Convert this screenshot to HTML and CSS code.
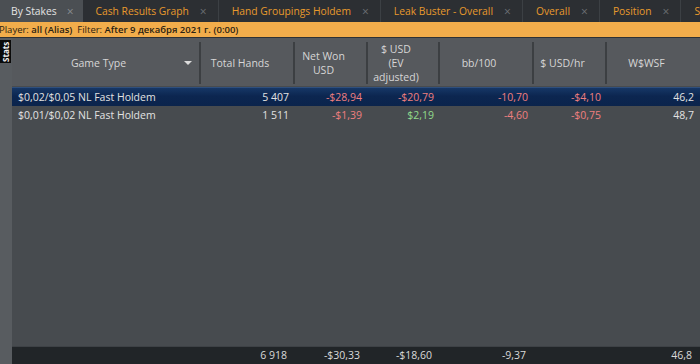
FILE: index.html
```html
<!DOCTYPE html>
<html>
<head lang="ru">
    <meta charset="UTF-8">
    <title>By Stakes</title>
    <link rel="stylesheet" href="styles.css">
</head>
<body>
    <div class="tabs">
        <div class="tab tab_active"><span>By Stakes</span><i>×</i></div>
        <div class="tab"><span>Cash Results Graph</span><i>×</i></div>
        <div class="tab"><span>Hand Groupings Holdem</span><i>×</i></div>
        <div class="tab"><span>Leak Buster - Overall</span><i>×</i></div>
        <div class="tab"><span>Overall</span><i>×</i></div>
        <div class="tab"><span>Position</span><i>×</i></div>
        <div class="tab tab_last"><span>Sess</span></div>
    </div>
    <div class="filter">
        Player: <b>all (Alias)</b>&nbsp; Filter: <b>After 9 декабря 2021 г. (0:00)</b>
    </div>
    <div class="main">
        <div class="side">
            <div class="side_label">Stats</div>
        </div>
        <div class="grid">
            <div class="row head">
                <div class="cell cell_game">Game Type<span class="arrow"></span></div>
                <div class="cell">Total Hands</div>
                <div class="cell">Net Won<br>USD</div>
                <div class="cell">$ USD<br>(EV<br>adjusted)</div>
                <div class="cell">bb/100</div>
                <div class="cell">$ USD/hr</div>
                <div class="cell">W$WSF</div>
            </div>
            <div class="row data selected">
                <div class="cell text">$0,02/$0,05 NL Fast Holdem</div>
                <div class="cell">5 407</div>
                <div class="cell neg">-$28,94</div>
                <div class="cell neg">-$20,79</div>
                <div class="cell neg">-10,70</div>
                <div class="cell neg">-$4,10</div>
                <div class="cell">46,2</div>
            </div>
            <div class="row data">
                <div class="cell text">$0,01/$0,02 NL Fast Holdem</div>
                <div class="cell">1 511</div>
                <div class="cell neg">-$1,39</div>
                <div class="cell pos">$2,19</div>
                <div class="cell neg">-4,60</div>
                <div class="cell neg">-$0,75</div>
                <div class="cell">48,7</div>
            </div>
            <div class="empty"></div>
            <div class="row total">
                <div class="cell text"></div>
                <div class="cell">6 918</div>
                <div class="cell">-$30,33</div>
                <div class="cell">-$18,60</div>
                <div class="cell">-9,37</div>
                <div class="cell"></div>
                <div class="cell">46,8</div>
            </div>
        </div>
    </div>
</body>
</html>
```

FILE: styles.css
```css
* {
    margin: 0;
    padding: 0;
    box-sizing: border-box;
}

html,
body {
    height: 100%;
}

body {
    display: flex;
    flex-direction: column;
    background-color: #474b4f;
    font-family: "Open Sans", "Noto Sans", sans-serif;
    font-size: 10.5px;
    color: #d6d6d6;
    overflow: hidden;
}

.tabs {
    display: flex;
    height: 22px;
    background-color: #2c2f33;
    white-space: nowrap;
    overflow: hidden;
    font-size: 10.3px;
}

.tab {
    display: flex;
    align-items: center;
    flex-shrink: 0;
    padding: 0 11px 0 13px;
    border-right: 1px solid #3c4044;
    color: #e89a2c;
}

.tab i {
    font-style: normal;
    font-size: 12px;
    color: #6c7074;
    margin-left: 11px;
}

.tab_active {
    background-color: #4b4f53;
    color: #e4e4e4;
    padding-left: 11px;
    padding-right: 9px;
    border-right: none;
}

.tab_active i {
    margin-left: 10px;
    color: #8a8e92;
}

.tab_last {
    border-right: none;
}

.filter {
    height: 16px;
    line-height: 15px;
    background-color: #f2ad4b;
    color: #2a2212;
    font-size: 9.5px;
    text-indent: -1px;
    white-space: nowrap;
    border-bottom: 1px solid #2e3134;
}

.filter b {
    font-weight: 600;
}

.main {
    flex: 1;
    display: flex;
    min-height: 0;
}

.side {
    width: 12px;
    background-color: #585c60;
    padding-top: 2px;
}

.side_label {
    width: 11px;
    height: 23px;
    background-color: #0b0b0b;
    color: #f0f0f0;
    font-size: 8px;
    font-weight: 700;
    writing-mode: vertical-rl;
    transform: rotate(180deg);
    text-align: center;
    line-height: 11px;
}

.grid {
    flex: 1;
    display: flex;
    flex-direction: column;
    min-width: 0;
}

.row {
    display: grid;
    grid-template-columns: 189px 94px 73px 72px 94px 73px 1fr;
}

.head {
    background-color: #56595d;
    padding: 4px 0 2px;
    height: 48px;
    text-align: center;
    line-height: 14px;
}

.head .cell {
    display: flex;
    align-items: center;
    justify-content: center;
    padding-right: 14px;
    border-right: 2px solid #3c3f42;
}

.head .cell:last-child {
    border-right: none;
}

.cell_game {
    position: relative;
}

.arrow {
    position: absolute;
    right: 7px;
    top: 50%;
    margin-top: -2px;
    border-style: solid;
    border-width: 4px 4px 0 4px;
    border-color: #dcdcdc transparent transparent;
}

.data {
    height: 19px;
    line-height: 19px;
    text-align: right;
    color: #e2e2e2;
}

.data .cell,
.total .cell {
    padding-right: 6px;
    white-space: nowrap;
}

.total .cell {
    padding-right: 8px;
}

.data .text {
    text-align: left;
    padding-left: 6px;
}

.selected {
    background: linear-gradient(#163766, #0c2650 45%, #0b244c);
    margin-top: 1px;
    border-top: 1px solid #2f4f7c;
}

.neg {
    color: #ef7f7f;
}

.pos {
    color: #92dc8c;
}

.empty {
    flex: 1;
    border-bottom: 1px solid #3e4246;
}

.total {
    height: 17px;
    line-height: 16px;
    text-align: right;
    background-color: #212528;
    color: #dadada;
}
```
